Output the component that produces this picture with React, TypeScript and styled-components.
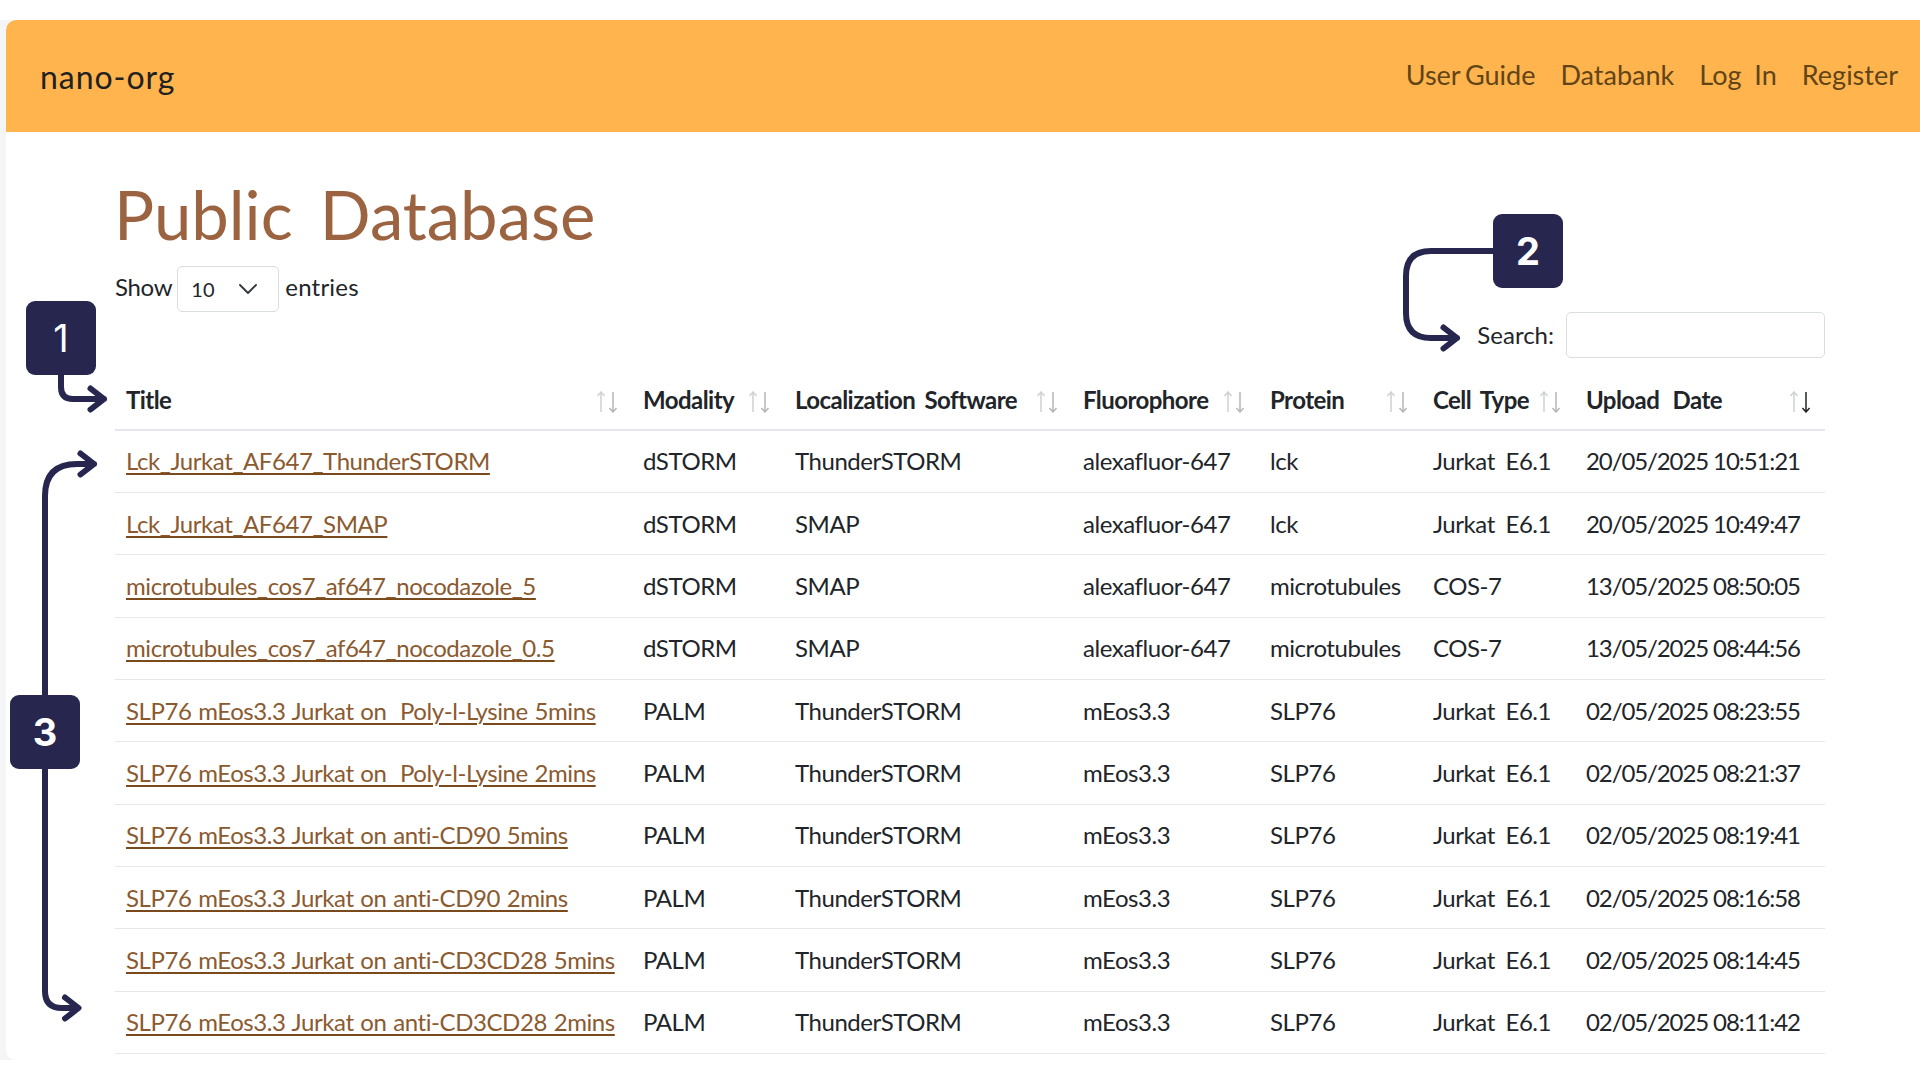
import React from 'react';
import styled, { createGlobalStyle } from 'styled-components';
import { ChevronDown } from 'lucide-react';

const GlobalStyle = createGlobalStyle`
  html, body {
    margin: 0;
    background: #ffffff;
  }
  body {
    font-family: "Lato", "Noto Sans", sans-serif;
    color: #212529;
  }
`;

interface Row {
  title: string;
  modality: string;
  software: string;
  fluorophore: string;
  protein: string;
  cellType: string;
  date: string;
}

const COLUMNS = [
  { label: 'Title', width: 517 },
  { label: 'Modality', width: 152 },
  { label: 'Localization Software', width: 288 },
  { label: 'Fluorophore', width: 187 },
  { label: 'Protein', width: 163 },
  { label: 'Cell Type', width: 153 },
  { label: 'Upload Date', width: 250, wordGap: 8, active: true }
];

const makeRow = (title: string, modality: string, software: string, fluorophore: string, protein: string, cellType: string, date: string): Row => ({
  title, modality, software, fluorophore, protein, cellType, date
});

const ROWS: Row[] = [
  makeRow('Lck_Jurkat_AF647_ThunderSTORM', 'dSTORM', 'ThunderSTORM', 'alexafluor-647', 'lck', 'Jurkat E6.1', '20/05/2025 10:51:21'),
  makeRow('Lck_Jurkat_AF647_SMAP', 'dSTORM', 'SMAP', 'alexafluor-647', 'lck', 'Jurkat E6.1', '20/05/2025 10:49:47'),
  makeRow('microtubules_cos7_af647_nocodazole_5', 'dSTORM', 'SMAP', 'alexafluor-647', 'microtubules', 'COS-7', '13/05/2025 08:50:05'),
  makeRow('microtubules_cos7_af647_nocodazole_0.5', 'dSTORM', 'SMAP', 'alexafluor-647', 'microtubules', 'COS-7', '13/05/2025 08:44:56'),
  makeRow('SLP76 mEos3.3 Jurkat on  Poly-l-Lysine 5mins', 'PALM', 'ThunderSTORM', 'mEos3.3', 'SLP76', 'Jurkat E6.1', '02/05/2025 08:23:55'),
  makeRow('SLP76 mEos3.3 Jurkat on  Poly-l-Lysine 2mins', 'PALM', 'ThunderSTORM', 'mEos3.3', 'SLP76', 'Jurkat E6.1', '02/05/2025 08:21:37'),
  makeRow('SLP76 mEos3.3 Jurkat on anti-CD90 5mins', 'PALM', 'ThunderSTORM', 'mEos3.3', 'SLP76', 'Jurkat E6.1', '02/05/2025 08:19:41'),
  makeRow('SLP76 mEos3.3 Jurkat on anti-CD90 2mins', 'PALM', 'ThunderSTORM', 'mEos3.3', 'SLP76', 'Jurkat E6.1', '02/05/2025 08:16:58'),
  makeRow('SLP76 mEos3.3 Jurkat on anti-CD3CD28 5mins', 'PALM', 'ThunderSTORM', 'mEos3.3', 'SLP76', 'Jurkat E6.1', '02/05/2025 08:14:45'),
  makeRow('SLP76 mEos3.3 Jurkat on anti-CD3CD28 2mins', 'PALM', 'ThunderSTORM', 'mEos3.3', 'SLP76', 'Jurkat E6.1', '02/05/2025 08:11:42')
];

const NAV_LINKS = [
  { label: 'User Guide', wordGap: -2 },
  { label: 'Databank', wordGap: 0 },
  { label: 'Log In', wordGap: 6 },
  { label: 'Register', wordGap: 0 }
];

const Page = styled.div`
  position: relative;
  width: 1920px;
  height: 1080px;
  padding-top: 20px;
  box-sizing: border-box;
  overflow: hidden;
`;

const Frame = styled.div`
  height: 1040px;
  padding-left: 6px;
  background: #f4f5f6;
`;

const Card = styled.div`
  height: 100%;
  background: #ffffff;
  border-radius: 10px 0 0 10px;
  overflow: hidden;
`;

const Navbar = styled.nav`
  display: flex;
  align-items: center;
  justify-content: space-between;
  height: 112px;
  padding: 0 22px 0 34px;
  background: #ffb44e;
`;

const Brand = styled.span`
  font-size: 32px;
  letter-spacing: 0.95px;
  color: #212121;
`;

const NavLinks = styled.div`
  display: flex;
  gap: 25px;
`;

const NavLink = styled.a<{ $wordGap: number }>`
  font-size: 27px;
  word-spacing: ${props => props.$wordGap}px;
  color: #624417;
  text-decoration: none;
  margin-top: -4px;
`;

const Main = styled.main`
  padding: 38px 95px 0 109px;
`;

const Heading = styled.h1`
  margin: 0 0 0 -1px;
  height: 96px;
  font-size: 67px;
  font-weight: 400;
  line-height: 89px;
  color: #9c6340;
  word-spacing: 10px;
`;

const LengthRow = styled.div`
  display: flex;
  align-items: center;
  gap: 5px;
  height: 46px;
  font-size: 24px;
`;

const LengthLabel = styled.span`
  margin-top: -5px;
  letter-spacing: -0.3px;
`;

const EntriesLabel = styled(LengthLabel)`
  margin-left: 1px;
  letter-spacing: 0.2px;
`;

const SelectWrap = styled.div`
  position: relative;
  width: 102px;
  height: 46px;
`;

const LengthSelect = styled.select`
  appearance: none;
  width: 100%;
  height: 100%;
  padding: 0 0 0 13px;
  border: 1px solid #dadde2;
  border-radius: 5px;
  background: #ffffff;
  font-family: inherit;
  font-size: 20px;
  color: #212529;
`;

const SelectChevron = styled(ChevronDown)`
  position: absolute;
  top: 7px;
  right: 15px;
  pointer-events: none;
`;

const SearchRow = styled.div`
  display: flex;
  align-items: center;
  justify-content: flex-end;
  gap: 12px;
  height: 46px;
  font-size: 24px;
`;

const SearchLabel = styled.span`
  margin-top: -2px;
`;

const SearchInput = styled.input`
  width: 259px;
  height: 46px;
  box-sizing: border-box;
  border: 1.5px solid #dadde2;
  border-radius: 5px;
`;

const Table = styled.table`
  width: 1710px;
  border-collapse: collapse;
  table-layout: fixed;
`;

const HeadCell = styled.th<{ $width: number; $wordGap?: number }>`
  position: relative;
  width: ${props => props.$width}px;
  height: 72px;
  padding: 11px 12px 0 11px;
  box-sizing: border-box;
  border-bottom: 2px solid #e3e6ea;
  font-size: 24px;
  font-weight: 700;
  letter-spacing: -0.55px;
  word-spacing: ${props => props.$wordGap ?? 4}px;
  text-align: left;
  white-space: nowrap;
`;

const SortIcon = styled.svg<{ $active?: boolean }>`
  position: absolute;
  top: 33px;
  right: 13px;
  width: 24px;
  height: 22px;
  fill: none;
  stroke-width: 1.5;

  .up {
    stroke: #cfd1d3;
  }
  .down {
    stroke: ${props => props.$active ? '#212529' : '#b5b7ba'};
  }
`;

const BodyRow = styled.tr`
  height: 62.35px;
  border-bottom: 1.5px solid #e5e7ea;
`;

const Cell = styled.td<{ $date?: boolean }>`
  padding: 0 11px 1px;
  font-size: 24px;
  letter-spacing: ${props => props.$date ? '-1.1px' : '-0.45px'};
  word-spacing: ${props => props.$date ? '0' : '5px'};
  white-space: nowrap;
`;

const TitleLink = styled.a`
  color: #8b5a2f;
  letter-spacing: -0.42px;
  word-spacing: 1px;
  text-decoration: underline;
  text-decoration-color: #7a4a1c;
  text-decoration-thickness: 2px;
  text-underline-offset: 3px;
  white-space: pre;
`;

const Annotations = styled.svg`
  position: absolute;
  top: 0;
  left: 0;
  width: 1920px;
  height: 1080px;
  pointer-events: none;
  fill: none;
  stroke: #26264f;
  stroke-width: 6;
  stroke-linecap: round;
  stroke-linejoin: round;
`;

const Badge = styled.div<{ $left: number; $top: number; $thin?: boolean }>`
  position: absolute;
  left: ${props => props.$left}px;
  top: ${props => props.$top}px;
  display: flex;
  align-items: center;
  justify-content: center;
  width: 70px;
  height: 74px;
  border-radius: 9px;
  background: #26264f;
  color: #ffffff;
  font-family: "Inter", "Liberation Sans", sans-serif;
  font-size: 38px;
  font-weight: ${props => props.$thin ? 400 : 700};
`;

const SortArrows: React.FC<{ active?: boolean }> = ({ active }) => (
  <SortIcon $active={active} viewBox="0 0 24 22">
    <path className="up" d="M6 21V1M2.500 5L6 1l3.500 4" />
    <path className="down" d="M18 1v20M14.500 17l3.500 4 3.500-4" />
  </SortIcon>
);

const App: React.FC = () => (
  <Page>
    <GlobalStyle />
    <Frame>
      <Card>
        <Navbar>
          <Brand>nano-org</Brand>
          <NavLinks>
            {NAV_LINKS.map(link => (
              <NavLink key={link.label} href="#" $wordGap={link.wordGap}>{link.label}</NavLink>
            ))}
          </NavLinks>
        </Navbar>
        <Main>
          <Heading>Public Database</Heading>
          <LengthRow>
            <LengthLabel>Show</LengthLabel>
            <SelectWrap>
              <LengthSelect defaultValue="10">
                <option value="10">10</option>
                <option value="25">25</option>
                <option value="50">50</option>
              </LengthSelect>
              <SelectChevron size={32} strokeWidth={1.4} color="#343a40" />
            </SelectWrap>
            <EntriesLabel>entries</EntriesLabel>
          </LengthRow>
          <SearchRow>
            <SearchLabel>Search:</SearchLabel>
            <SearchInput type="search" />
          </SearchRow>
          <Table>
            <thead>
              <tr>
                {COLUMNS.map(col => (
                  <HeadCell key={col.label} $width={col.width} $wordGap={col.wordGap}>
                    {col.label}
                    <SortArrows active={col.active} />
                  </HeadCell>
                ))}
              </tr>
            </thead>
            <tbody>
              {ROWS.map(row => (
                <BodyRow key={row.title}>
                  <Cell><TitleLink href="#">{row.title}</TitleLink></Cell>
                  <Cell>{row.modality}</Cell>
                  <Cell>{row.software}</Cell>
                  <Cell>{row.fluorophore}</Cell>
                  <Cell>{row.protein}</Cell>
                  <Cell>{row.cellType}</Cell>
                  <Cell $date>{row.date}</Cell>
                </BodyRow>
              ))}
            </tbody>
          </Table>
        </Main>
      </Card>
    </Frame>

    <Annotations viewBox="0 0 1920 1080">
      <path d="M61 375v12q0 12 12 12h31M90.500 388.500L104 399l-13.500 10.500" />
      <path d="M45 695V496q0-32 32-32h17M80.500 453.500L94 464l-13.500 10.500" />
      <path d="M45 769v222q0 17 17 17h16M65 997.500L78.500 1008 65 1018.500" />
      <path d="M1493 251h-62q-25 0-25 25v37q0 25 25 25h26M1443.500 327.500L1457 338l-13.500 10.500" />
    </Annotations>
    <Badge $left={26} $top={301} $thin>1</Badge>
    <Badge $left={1493} $top={214}>2</Badge>
    <Badge $left={10} $top={695}>3</Badge>
  </Page>
);

export default App;
